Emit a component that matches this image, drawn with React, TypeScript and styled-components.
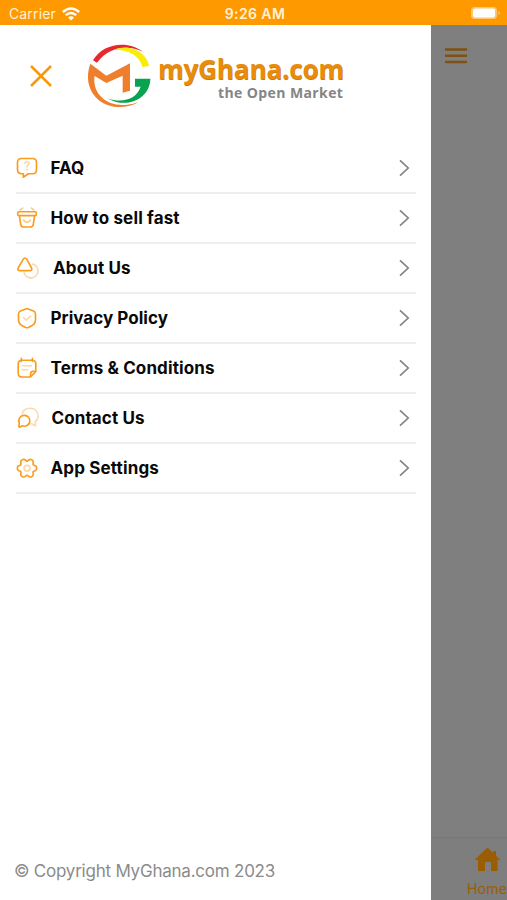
import React from "react";
import styled, { createGlobalStyle } from "styled-components";

const Global = createGlobalStyle`
  * { box-sizing: border-box; }
  body { margin: 0; background: #7f7f7f; font-family: Inter, "Liberation Sans", sans-serif; }
`;
const Screen = styled.div`
  width: 507px; height: 900px; display: flex; flex-direction: column; overflow: hidden;
`;
const StatusBar = styled.header`
  height: 25px; flex: none; background: #ff9900; color: #fff2d8;
  display: grid; grid-template-columns: 1fr auto 1fr; align-items: center;
  padding: 2px 6px 0 9px; font-size: 14px; line-height: 20px;
`;
const Carrier = styled.div`
  display: flex; align-items: center; gap: 6px; letter-spacing: 0.14px;
`;
const Time = styled.div`
  font-weight: 600; font-size: 14px; letter-spacing: 0.4px;
`;
const BatterySlot = styled.div`
  display: flex; justify-content: flex-end; margin-top: -1px;
`;
const Body = styled.div`
  flex: 1; display: flex; min-height: 0;
`;
const Drawer = styled.aside`
  width: 431px; flex: none; background: #fff; display: flex; flex-direction: column;
`;
const DrawerHeader = styled.div`
  height: 119px; flex: none; display: flex; align-items: flex-start; padding: 17px 0 0 29px;
`;
const CloseButton = styled.button`
  border: 0; background: none; padding: 0; margin-top: 22px; width: 24px; height: 24px; display: flex;
`;
const Brand = styled.div`
  display: flex; margin-left: 32px;
`;
const BrandText = styled.div`
  width: 188px; margin-left: 2px; padding-top: 13px; display: flex; flex-direction: column;
`;
const BrandName = styled.div`
  font: 700 26px/28px "Open Sans", sans-serif; letter-spacing: -0.1px; color: #e98c0b; white-space: nowrap;
  margin-left: 1px; text-shadow: 0.5px 0.6px 0 #c77b14;
`;
const Tagline = styled.div`
  font: 700 14px/16px "Open Sans", sans-serif; letter-spacing: 0.4px; color: #858585;
  margin: 2px 0 0 61px; white-space: nowrap;
`;
const Menu = styled.nav`
  width: 400px; margin-left: 16px;
`;
const MenuItem = styled.a`
  height: 50px; display: flex; align-items: center; border-bottom: 2px solid #eeeeef; padding-right: 3px;
`;
const IconBox = styled.span`
  width: 24px; height: 24px; flex: none; display: flex;
`;
const Label = styled.span<{ $left: number; $spacing: number }>`
  flex: 1; margin-left: ${(p) => p.$left}px; color: #090909; font-size: 17px; font-weight: 700;
  letter-spacing: ${(p) => p.$spacing}px; white-space: nowrap;
`;
const Copyright = styled.footer`
  margin: auto 0 18px 14px; font-size: 17px; line-height: 22px; color: #8b8b8b; letter-spacing: -0.23px;
`;
const Backdrop = styled.main`
  flex: 1; background: #7f7f7f; display: flex; flex-direction: column; justify-content: space-between;
  overflow: hidden; padding-top: 22px;
`;
const HamburgerIcon = styled.svg`
  margin-left: 13px;
`;
const TabBar = styled.div`
  height: 63px; border-top: 1px solid #777; display: flex; flex-direction: column; align-items: flex-start;
  padding-top: 9px; color: #9a5d04; background: #7e7e7e;
`;
const HomeIcon = styled.svg`
  margin-left: 43px;
`;
const HomeLabel = styled.span`
  margin: 8px 0 0 36px; font-size: 14px; line-height: 17px; letter-spacing: 0.2px; white-space: nowrap;
`;

const Chevron = () => (
  <svg width="14" height="18" viewBox="0 0 14 18">
    <path d="M1 1.3 9.2 9 1 16.7" fill="none" stroke="#858585" strokeWidth="1.7" />
  </svg>
);

const Logo = () => (
  <svg width="70" height="67" viewBox="195 20 210 201">
    <path d="M219 75C249 22 326 15 368 49C325 29 269 32 231 82Z" fill="#e5292e" />
    <path d="M282 43C333 22 383 56 387 92L367 95C360 64 331 43 282 43Z" fill="#f7ed08" />
    <path d="M211 85 259 121 330 84V166L308 172V121L259 143 224 122C216 167 252 215 322 208Q340 207 357 200C318 222 267 220 235 193C201 165 198 121 211 85Z" fill="#ef7f2d" />
    <path d="M345 130H391C391 186 326 223 264 190C312 204 351 189 362 154H345Z" fill="#08a350" />
  </svg>
);

// Six-lobed gear outline, with lobes at 0, 60, 120... degrees.
const gearPath =
  Array.from({ length: 72 }, (_, i) => {
    const angle = (i * Math.PI) / 36;
    const radius = 8.6 + 1.3 * Math.cos(6 * angle) - 0.25 * Math.cos(12 * angle);
    return `${i ? "L" : "M"}${(11 + radius * Math.cos(angle)).toFixed(2)} ${(11.5 + radius * Math.sin(angle)).toFixed(2)}`;
  }).join("") + "Z";

type IconName = "faq" | "sell" | "about" | "privacy" | "terms" | "contact" | "settings";

const drawings: Record<IconName, React.ReactNode> = {
  faq: (
    <>
      <path d="M5.5 2.5h11q4 0 4 4v7.2q0 4-4 4h-4.2l-5 3.500V17.700H5.500q-4 0-4-4V6.500q0-4 4-4Z" />
      <path opacity=".4" d="M9 7.400q0-1.700 2-1.700t2 1.800q0 1-1.200 1.800-.8.5-.8 1.600M11 13.300v.6" />
    </>
  ),
  sell: (
    <>
      <path d="M1.700 6.100q0-1.100 1.200-1.100h16.200q1.200 0 1.200 1.100v1.700q0 1.100-1.200 1.100H2.900q-1.200 0-1.200-1.100ZM3.400 9.200l1.300 8.400q.4 2.700 3 2.700h6.600q2.600 0 3-2.700l1.300-8.400" />
      <path opacity=".55" d="M4.200 3.200 6.600 1.400M17.800 3.200 15.400 1.400M7.500 13.400q3.500 4.500 7 0" />
    </>
  ),
  about: (
    <>
      <path opacity=".4" d="M16.500 7.400a7 7 0 1 1-8.400 8.400" />
      <path d="M7.200 2.600q1.800-2.700 3.600 0l4.500 8.200q1.600 3.100-1.600 3.100H4.100q-3.300 0-1.700-3.100Z" />
    </>
  ),
  privacy: (
    <>
      <path d="M9.700 2.200q1.300-.5 2.600 0l5.200 2.100q2 .8 2 3v5.400q0 4.400-3.800 6.300l-3.300 1.700q-1.400.7-2.800 0L6.300 19q-3.800-1.900-3.800-6.300V7.300q0-2.200 2-3Z" />
      <path opacity=".4" d="m7.700 11.200 2.400 2.200 4.500-4" />
    </>
  ),
  terms: (
    <>
      <path d="M6 3.500h10q3.800 0 3.800 3.800v7.400l-5.200 5.600H6q-3.800 0-3.800-3.800V7.300q0-3.800 3.800-3.800ZM5.400 1.500v3.300M16.400 1.500v3.300M19.500 14.500h-2.300q-2.600 0-2.600 2.600V20" />
      <path opacity=".4" d="M6.200 9h9.300M6.200 13h5.300" />
    </>
  ),
  contact: (
    <>
      <path opacity=".38" d="M6.300 7.200C7 3 10.400 1.500 14 1.500c5 0 8 3 8 7.500 0 2.800-1.200 5-2.800 6.200l.4 3.200q0 1-.9.5l-3-1.900h-1.200" />
      <path d="M8.300 8.700a5.400 5.400 0 0 0-5 7.800l-.3 3.200q0 1 .9.600l2.500-1.200a5.400 5.400 0 1 0 1.900-10.400Z" />
    </>
  ),
  settings: (
    <>
      <path d={gearPath} />
      <circle cx="11" cy="11.500" r="2.900" opacity=".4" />
    </>
  ),
};

const MenuIcon = ({ name }: { name: IconName }) => (
  <svg width="24" height="24" viewBox={name === "faq" ? "0 0 24 24" : "0 -0.7 24 24"} fill="none" stroke="#f99d20" strokeWidth="1.65" strokeLinecap="round" strokeLinejoin="round">
    {drawings[name]}
  </svg>
);

const items: { icon: IconName; text: string; left: number; spacing: number }[] = [
  { icon: "faq", text: "FAQ", left: 10.5, spacing: 0 },
  { icon: "sell", text: "How to sell fast", left: 10.5, spacing: 0.15 },
  { icon: "about", text: "About Us", left: 13, spacing: 0.12 },
  { icon: "privacy", text: "Privacy Policy", left: 10.5, spacing: 0.04 },
  { icon: "terms", text: "Terms & Conditions", left: 10.5, spacing: 0.12 },
  { icon: "contact", text: "Contact Us", left: 11.5, spacing: 0.12 },
  { icon: "settings", text: "App Settings", left: 10.5, spacing: 0.15 },
];

export default function App() {
  return (
    <Screen>
      <Global />
      <StatusBar>
        <Carrier>
          Carrier
          <svg width="18" height="14" viewBox="0 0 18 14" fill="none" stroke="#fff" strokeWidth="2.4">
            <path d="M.8 5Q9-2 17.2 5M3.8 8.2Q9 3.8 14.2 8.2" />
            <path d="M6 10.4Q9 8 12 10.4L9 13.6Z" fill="#fff" stroke="none" />
          </svg>
        </Carrier>
        <Time>9:26 AM</Time>
        <BatterySlot>
          <svg width="31" height="14" viewBox="0 0 31 14">
            <rect x="1" y="1" width="26" height="12" rx="3.5" fill="#ffc66e" />
            <rect x="3" y="2.5" width="22" height="9" rx="2" fill="#fff" />
            <path d="M28.3 5v4q1.5-.6 1.5-2t-1.5-2Z" fill="#ffc66e" />
          </svg>
        </BatterySlot>
      </StatusBar>
      <Body>
        <Drawer>
          <DrawerHeader>
            <CloseButton aria-label="Close">
              <svg width="24" height="24" viewBox="0 0 24 24">
                <path d="m2 2 20 20M22 2 2 22" stroke="#fb980a" strokeWidth="2.5" />
              </svg>
            </CloseButton>
            <Brand>
              <Logo />
              <BrandText>
                <BrandName>myGhana.com</BrandName>
                <Tagline>the Open Market</Tagline>
              </BrandText>
            </Brand>
          </DrawerHeader>
          <Menu>
            {items.map((item) => (
              <MenuItem key={item.icon}>
                <IconBox><MenuIcon name={item.icon} /></IconBox>
                <Label $left={item.left} $spacing={item.spacing}>{item.text}</Label>
                <Chevron />
              </MenuItem>
            ))}
          </Menu>
          <Copyright>© Copyright MyGhana.com 2023</Copyright>
        </Drawer>
        <Backdrop>
          <HamburgerIcon width="24" height="18" viewBox="0 0 24 18">
            <path d="M1 2.5h22M1 8.8h22M1 15h22" stroke="#7f5211" strokeWidth="2.5" />
          </HamburgerIcon>
          <TabBar>
            <HomeIcon width="27" height="25" viewBox="0 0 27 25">
              <path d="M13.5.5 19 5.8V4h3v4.7l4.5 4.4h-3V24H17v-9h-6v9H4V13.1H.5Z" fill="#9a5d04" />
            </HomeIcon>
            <HomeLabel>Home</HomeLabel>
          </TabBar>
        </Backdrop>
      </Body>
    </Screen>
  );
}
